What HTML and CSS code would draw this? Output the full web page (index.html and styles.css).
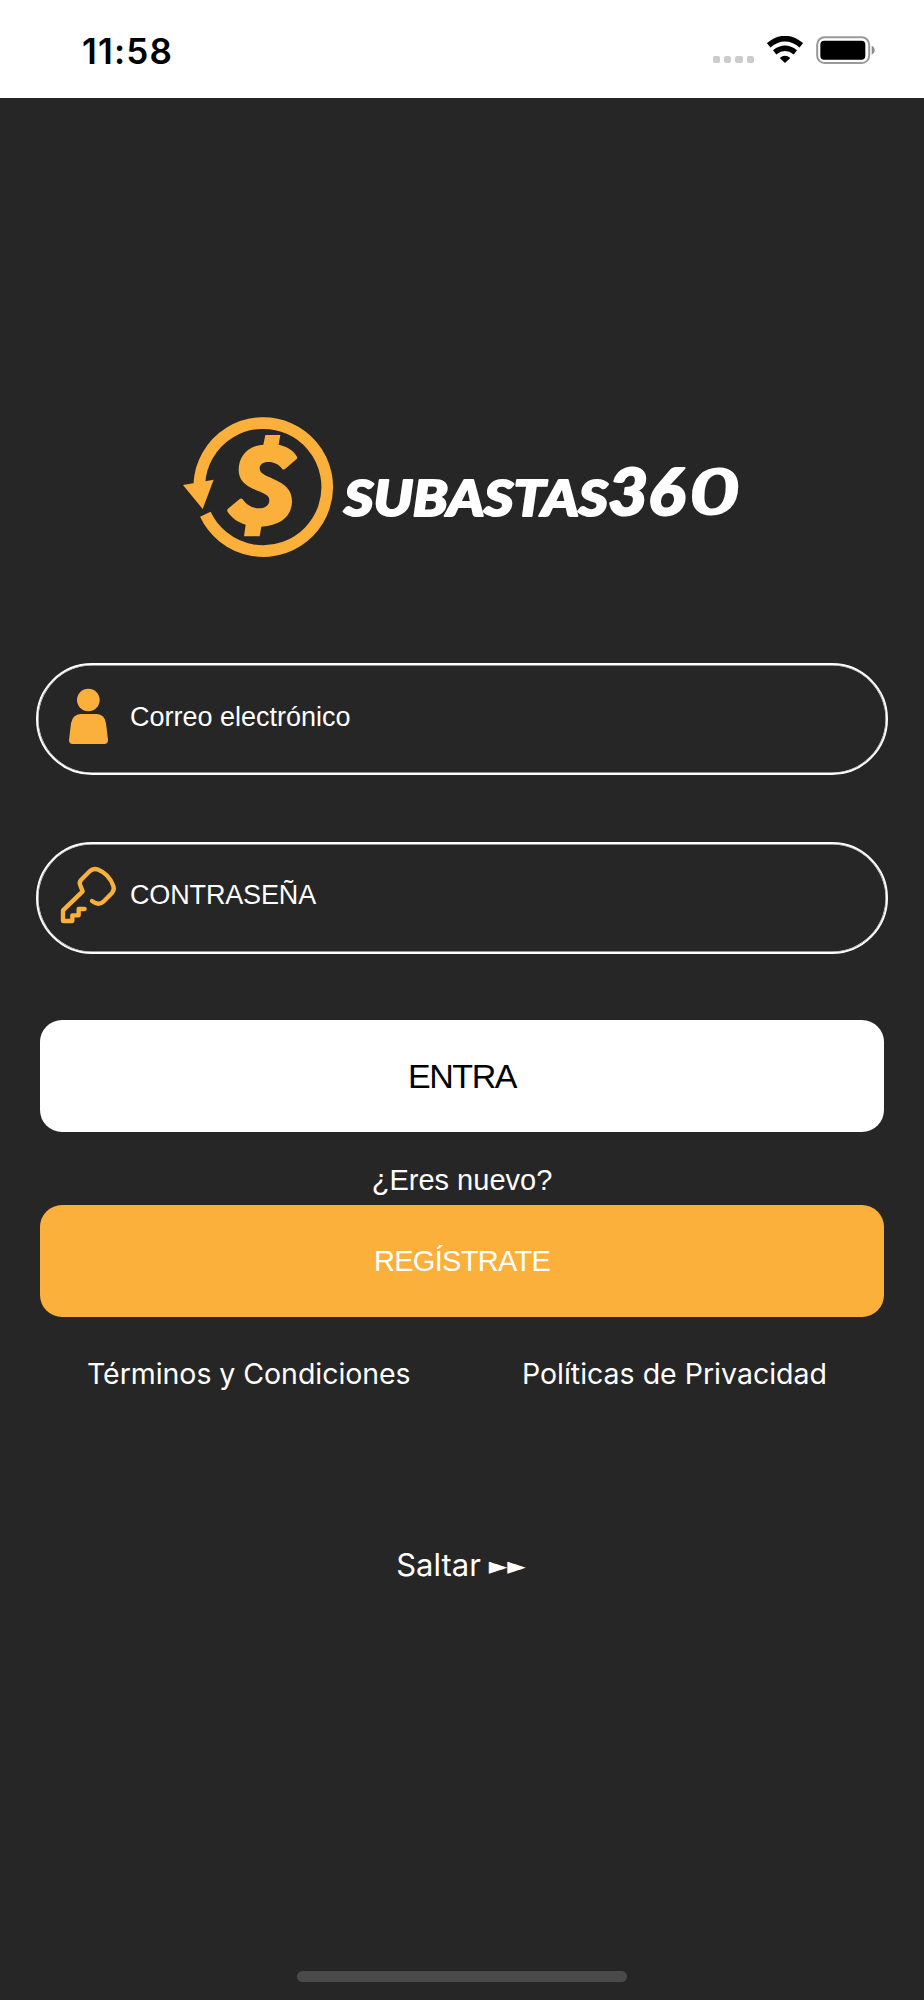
FILE: index.html
```html
<!DOCTYPE html>
<html lang="es">
<head>
<meta charset="utf-8">
<title>Subastas360</title>
<link rel="stylesheet" href="styles.css">
</head>
<body>
<header class="status">
  <span class="time">11:58</span>
  <span class="signal"><i></i><i></i><i></i><i></i></span>
  <svg class="wifi" width="36" height="28" viewBox="0 0 108 84">
    <path d="M5 28Q54-12 103 28" fill="none" stroke="#000" stroke-width="17"/>
    <path d="M23 49Q54 25 85 49" fill="none" stroke="#000" stroke-width="16"/>
    <path d="M38 66Q54 53 70 66L54 81Z"/>
  </svg>
  <svg class="battery" width="60" height="28" viewBox="0 0 180 84">
    <rect x="3.500" y="4" width="156" height="77" rx="22" fill="none" stroke="#999" stroke-width="6"/>
    <rect x="13" y="14" width="135" height="57" rx="12"/>
    <path d="M167 29Q176 33 176 43Q176 52 167 56Z" fill="#8c8c8c"/>
  </svg>
</header>
<main class="screen">
  <div class="logo">
    <svg width="572" height="170" viewBox="0 0 572 170">
      <g transform="scale(.33333)">
        <path d="M88 250A192 192 0 1 1 106 343" fill="none" stroke="#fbb03b" stroke-width="35"/>
        <path d="M39 255L131 239L98 327Z" fill="#fbb03b"/>
        <path d="M286 105H331L326 134C350 139 370 150 381 170Q383 175 379 178L345 207Q341 210 337 207C325 192 312 186 296 186C278 186 269 194 269 205C269 222 290 228 310 237C345 252 366 270 366 304C366 345 335 377 274 380L269 409H222L227 374C204 368 184 354 172 334Q170 330 174 326L209 297Q214 294 218 298C230 315 246 325 268 325C287 325 298 315 298 300C298 285 280 279 262 272C230 259 206 243 206 210C206 168 234 137 280 134Z" fill="#fbb03b"/>
      </g>
      <text class="word" x="174" y="115.500" font-size="48.500" textLength="264" lengthAdjust="spacingAndGlyphs">SUBASTAS</text>
      <text class="word" x="438" y="115" font-size="64" textLength="77" lengthAdjust="spacingAndGlyphs">36</text>
      <text class="word round" x="518" y="115" font-size="64" textLength="53" lengthAdjust="spacingAndGlyphs">0</text>
    </svg>
  </div>
  <form class="form">
    <label class="field">
      <svg class="icon" width="60" height="64" viewBox="0 0 180 192">
        <g fill="#fbb03b"><circle cx="91" cy="45" r="34"/>
        <path d="M68 87H116Q140 88 144 115L150 165Q150 177 139 177H44Q33 177 33 165L39 115Q44 88 68 87Z"/></g>
      </svg>
      <span class="hint mail">Correo electrónico</span>
    </label>
    <label class="field">
      <svg class="icon" width="60" height="64" viewBox="0 0 180 192">
        <path d="M102 114L110 119Q124 127 136 116L162 90Q170 81 166 69C157 43 138 27 118 19Q105 15 95 25L69 51Q63 58 66 65L74 85L15 142V174H43V157H62V138H80" fill="none" stroke="#fbb03b" stroke-width="13" stroke-linecap="round" stroke-linejoin="round"/>
      </svg>
      <span class="hint pass">CONTRASEÑA</span>
    </label>
    <button class="btn enter" type="button"><span>ENTRA</span></button>
    <p class="new"><span>¿Eres nuevo?</span></p>
    <button class="btn register" type="button"><span>REGÍSTRATE</span></button>
  </form>
  <nav class="links">
    <a class="terms">Términos y Condiciones</a>
    <a class="privacy">Políticas de Privacidad</a>
  </nav>
  <a class="skip"><span>Saltar</span><span class="arrows">►►</span></a>
  <div class="home"></div>
</main>
</body>
</html>
```
FILE: styles.css
```css
* { box-sizing: border-box; }
body {
  margin: 0;
  width: 924px;
  height: 2000px;
  display: flex;
  flex-direction: column;
  overflow: hidden;
  background: #262626;
  color: #fff;
  font-family: "Liberation Sans", Arial, sans-serif;
}
.status {
  height: 98px;
  flex: none;
  display: flex;
  align-items: flex-start;
  padding: 36px 48px 0 82px;
  background: #fff;
  color: #000;
}
.time {
  flex: 1;
  margin-top: -5px;
  font: 600 35px/40px Inter, sans-serif;
  letter-spacing: 1.200px;
}
.signal { display: flex; gap: 4px; margin: 20px 13px 0 0; }
.signal i { width: 7.300px; height: 7.300px; border-radius: 2px; background: #ccc; }
.wifi { margin-right: 13px; }
.screen { flex: 1; display: flex; flex-direction: column; }
.logo { height: 170px; margin: 302px 0 0 170px; }
.logo svg { display: block; overflow: visible; }
.word {
  fill: #fff;
  stroke: #fff;
  stroke-width: 2px;
  stroke-linejoin: round;
  font-family: Lato, sans-serif;
  font-weight: 900;
  font-style: italic;
}
.round { stroke-width: 0; }
.form { display: flex; flex-direction: column; margin: 93px 36px 0; }
.field {
  height: 112px;
  display: flex;
  align-items: center;
  margin-bottom: 66.500px;
  padding: 0 0 5px 20px;
  border: 2px solid #fff;
  border-radius: 56px;
  box-shadow: inset 0 0 0 .5px #fff;
}
.icon { flex: none; margin-right: 12px; }
.hint { font-size: 27px; line-height: 40px; white-space: nowrap; }
.pass { letter-spacing: -.15px; }
.btn {
  height: 112px;
  margin: 0 4px;
  padding: 0;
  border: 0;
  border-radius: 22px;
  font-family: inherit;
}
.enter { padding-top: 1px; background: #fff; color: #000; font-size: 34px; letter-spacing: -1.400px; }
.register { background: #fbb03b; color: #fff; font-size: 29px; letter-spacing: -.7px; }
.new {
  height: 73px;
  margin: 0;
  padding-top: 28px;
  text-align: center;
  font-size: 29px;
  line-height: 40px;
}
.links {
  display: flex;
  justify-content: space-between;
  margin: 37px 97px 0 87px;
  font: 400 28.500px/40px Inter, sans-serif;
}
.terms { letter-spacing: -.05px; }
.skip {
  display: flex;
  justify-content: center;
  gap: 8px;
  margin: 151px 2px 0 0;
  font: 400 31px/40px Inter, sans-serif;
}
.arrows { padding-top: 1px; font-family: "DejaVu Sans", sans-serif; font-size: 24px; }
.home {
  width: 330px;
  height: 11px;
  margin: auto 0 18px 297px;
  border-radius: 6px;
  background: #4a4a4a;
}
```
